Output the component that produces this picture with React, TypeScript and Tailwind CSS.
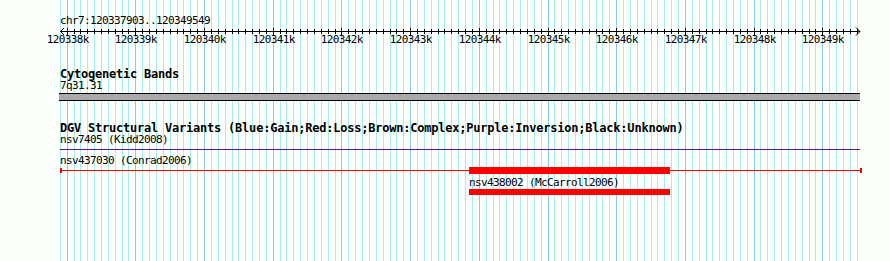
import React from "react";

const L = 60;
const W = 800;
const START = 120337903;
const END = 120349549;
const sx = (bp: number) => L + ((bp - START) * W) / (END - START);

const gridBps: number[] = [];
for (let bp = 120337900; bp <= END; bp += 100) gridBps.push(bp);
const majors: number[] = [];
for (let bp = 120338000; bp <= END; bp += 1000) majors.push(bp);

const mono = { fontFamily: '"DejaVu Sans Mono", "Liberation Mono", monospace' };

function Grid() {
  return (
    <svg className="absolute inset-0" width={890} height={261} shapeRendering="crispEdges">
      {gridBps.map((bp) => {
        const x = Math.round(sx(bp)) + 0.5;
        const major = bp % 1000 === 0;
        return (
          <line key={bp} x1={x} x2={x} y1={0} y2={261} stroke={major ? "#8cc8ec" : "#a8ecec"} strokeWidth={1} />
        );
      })}
    </svg>
  );
}

function Ruler() {
  return (
    <svg width={W + 2} height={9} className="block" shapeRendering="crispEdges">
      <line x1={0} x2={W} y1={4.5} y2={4.5} stroke="#000" />
      {gridBps.slice(1).map((bp) => {
        const x = Math.round(sx(bp)) - L + 0.5;
        const major = bp % 1000 === 0;
        return <line key={bp} x1={x} x2={x} y1={major ? 1 : 2} y2={major ? 8 : 7} stroke="#000" />;
      })}
      <polyline points="4,1 0.5,4.5 4,8" fill="none" stroke="#000" shapeRendering="auto" />
      <polyline points="796,0.5 800,4.5 796,8.5" fill="none" stroke="#000" shapeRendering="auto" />
    </svg>
  );
}

const small = "h-[12px] leading-[12px] text-[11px] tracking-[-0.62px] whitespace-pre";
const bold = "h-[12px] leading-[12px] text-[12px] tracking-[-0.22px] font-bold whitespace-pre";

export default function App() {
  return (
    <div className="relative w-[890px] h-[261px] overflow-hidden bg-[#fcfffc] text-black" style={mono}>
      <Grid />
      <div className="relative flex flex-col pl-[60px] pt-[15px] w-[862px]">
        <div className={small}>chr7:120337903..120349549</div>
        <div className="-mb-[2px]">
          <Ruler />
        </div>
        <div className="relative h-[12px] w-[800px]">
          {majors.map((bp) => (
            <div
              key={bp}
              className="absolute top-0 w-[48px] text-center leading-[12px] text-[11px] tracking-[-0.62px]"
              style={{ left: Math.round(sx(bp)) - L - 24 + 0.8 }}
            >
              {Math.round(bp / 1000)}k
            </div>
          ))}
        </div>

        <div className={`mt-[22px] ${bold}`}>Cytogenetic Bands</div>
        <div className={small}>7q31.31</div>
        <div className="mt-[1px] h-[8px] w-[801px] -ml-[1px] border-y border-black bg-[#aaaaaa]" />

        <div className={`mt-[21px] ${bold}`}>
          DGV Structural Variants (Blue:Gain;Red:Loss;Brown:Complex;Purple:Inversion;Black:Unknown)
        </div>
        <div className={small}>nsv7405 (Kidd2008)</div>
        <div className="mt-[3px] h-[1px] w-[800px] bg-[#5b0f9e]" />
        <div className={`mt-[5px] ${small}`}>nsv437030 (Conrad2006)</div>
        <div className="relative flex items-center justify-between h-[7px] w-[802px]">
          <div className="absolute left-0 right-0 top-[3px] h-[1px] bg-[#ff0000]" />
          <div className="h-[5px] w-[2px] bg-[#ff0000]" />
          <div className="relative h-[7px] w-[201px] ml-[407px] bg-[#ff0000]" />
          <div className="flex-1" />
          <div className="h-[5px] w-[2px] bg-[#ff0000]" />
        </div>
        <div className="mt-[3px] flex flex-col pl-[409px]">
          <div className={small}>nsv438002 (McCarroll2006)</div>
          <div className="h-[6px] w-[201px] bg-[#ff0000]" />
        </div>
      </div>
    </div>
  );
}
